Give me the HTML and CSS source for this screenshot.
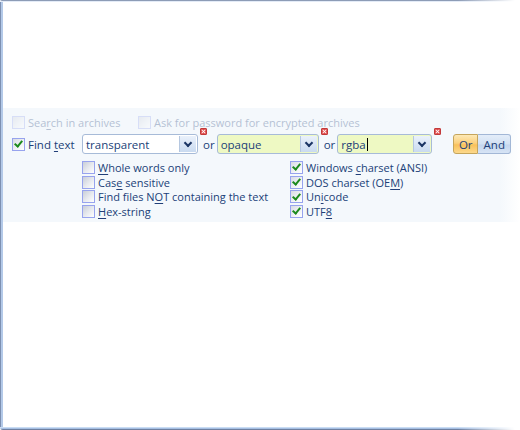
FILE: index.html
```html
<!DOCTYPE html>
<html lang="en">
<head>
    <meta charset="UTF-8">
    <title>Find text</title>
    <link rel="stylesheet" href="styles.css">
</head>
<body>
    <div class="window">
        <div class="edge-top"></div>
        <div class="middle">
            <div class="edge-left"></div>
            <div class="content">
                <div class="panel">
                    <!-- archive options, fading out -->
                    <div class="row-faded">
                        <label class="opt opt-archives"><span class="box"></span><span>Sea<u>r</u>ch in archives</span></label>
                        <label class="opt"><span class="box"></span><span>Ask for password for encrypted archives</span></label>
                    </div>

                    <div class="row-find">
                        <label class="opt find-label"><span class="box checked"></span><span>Find <u>t</u>ext</span></label>
                        <div class="combo combo-1">
                            <span class="combo-text">transparent</span>
                            <span class="drop"></span>
                            <span class="del"></span>
                        </div>
                        <span class="or">or</span>
                        <div class="combo combo-2 hit">
                            <span class="combo-text">opaque</span>
                            <span class="drop"></span>
                            <span class="del"></span>
                        </div>
                        <span class="or">or</span>
                        <div class="combo combo-3 hit">
                            <span class="combo-text">rgba<span class="caret"></span></span>
                            <span class="drop"></span>
                            <span class="del"></span>
                        </div>
                        <div class="toggle">
                            <span class="tg tg-or">Or</span>
                            <span class="tg tg-and">And</span>
                        </div>
                    </div>

                    <div class="row-opts">
                        <div class="col">
                            <label class="opt"><span class="box"></span><span><u>W</u>hole words only</span></label>
                            <label class="opt"><span class="box"></span><span>Cas<u>e</u> sensitive</span></label>
                            <label class="opt"><span class="box"></span><span>Find files N<u>O</u>T containing the text</span></label>
                            <label class="opt"><span class="box"></span><span><u>H</u>ex-string</span></label>
                        </div>
                        <div class="col">
                            <label class="opt"><span class="box checked"></span><span>Windows <u>c</u>harset (ANSI)</span></label>
                            <label class="opt"><span class="box checked"></span><span>DOS charset (OE<u>M</u>)</span></label>
                            <label class="opt"><span class="box checked"></span><span>Un<u>i</u>code</span></label>
                            <label class="opt"><span class="box checked"></span><span>UTF<u>8</u></span></label>
                        </div>
                    </div>
                </div>
            </div>
        </div>
        <div class="edge-bottom"></div>
    </div>
</body>
</html>
```

FILE: styles.css
```css
body {
    margin: 0;
    background: #ffffff;
    font-family: "Open Sans", "Noto Sans", sans-serif;
    font-size: 11px;
    color: #213f78;
}

.window {
    width: 520px;
    height: 430px;
    display: flex;
    flex-direction: column;
}

.edge-top {
    height: 2px;
    border-top-left-radius: 3px;
    background:
        linear-gradient(to right, rgba(255,255,255,0) 88%, #ffffff 99%),
        linear-gradient(to bottom, #8d9cb6 0 1px, #e3ebf7 1px 2px);
}

.middle {
    flex: 1;
    display: flex;
}

.edge-left {
    width: 3px;
    background: linear-gradient(to right, #7d90b1 0 1px, #b3c9e8 1px 3px);
}

.edge-bottom {
    height: 3px;
    border-bottom-left-radius: 3px;
    background:
        linear-gradient(to right, rgba(255,255,255,0) 88%, #ffffff 99%),
        linear-gradient(to bottom, #c9dcf3 0 1px, #a6bfe2 1px 2px, #6f80a0 2px 3px);
}

.content {
    flex: 1;
    padding-top: 106px;
}

.panel {
    height: 106px;
    padding-top: 8px;
    background: linear-gradient(to right, #f4f8fc 96%, #ffffff 100%);
}

.row-faded {
    display: flex;
    height: 13px;
    padding-left: 9px;
    opacity: 0.3;
}

.opt {
    display: flex;
    align-items: center;
    gap: 3px;
    height: 15px;
    white-space: nowrap;
}

.row-faded .opt {
    height: 13px;
}

.opt u {
    text-decoration-thickness: 1px;
    text-underline-offset: 2px;
}

.opt-archives {
    width: 126px;
}

.box {
    width: 11px;
    height: 11px;
    border: 1px solid #97a3ee;
    background: linear-gradient(135deg, #c9ced8 0%, #e9ebf0 55%, #ffffff 100%);
    display: flex;
    align-items: center;
    justify-content: center;
    flex-shrink: 0;
}

.box.checked {
    background: linear-gradient(135deg, #d7dbe3 0%, #f2f3f6 60%, #ffffff 100%);
}

.box.checked::after {
    content: "";
    width: 3px;
    height: 6px;
    border: solid #1d8a1d;
    border-width: 0 2px 2px 0;
    transform: rotate(40deg);
    margin-top: -2px;
}

.row-find {
    display: flex;
    align-items: center;
    height: 20px;
    margin-top: 5px;
    padding-left: 9px;
}

.find-label {
    width: 70px;
    font-size: 11.5px;
}

.combo {
    position: relative;
    height: 18px;
    border: 1px solid #a7bbd8;
    border-radius: 3px;
    background: #ffffff;
    display: flex;
    align-items: center;
    font-size: 11.5px;
}

.combo.hit {
    background: #eef9c3;
}

.combo-1 { width: 114px; }
.combo-2 { width: 100px; }
.combo-3 { width: 93px; }

.combo-text {
    flex: 1;
    padding-left: 3px;
    display: flex;
    align-items: center;
}

.caret {
    width: 1px;
    height: 13px;
    background: #000000;
    margin-left: 1px;
}

.drop {
    width: 16px;
    height: 16px;
    margin-right: 1px;
    border-left: 1px solid #b5c7e0;
    background: linear-gradient(to bottom, #eaf1fb, #c9daf0);
    display: flex;
    align-items: center;
    justify-content: center;
}

.drop::after {
    content: "";
    width: 4px;
    height: 4px;
    border: solid #1b3564;
    border-width: 0 2px 2px 0;
    transform: rotate(45deg);
    margin-top: -3px;
}

/* small red "remove" badge on the combo corner */
.del {
    position: absolute;
    top: -7px;
    right: -10px;
    width: 7px;
    height: 7px;
    border-radius: 1px;
    background: #e04a4a;
    border: 1px solid #c23a3a;
    box-sizing: border-box;
}

.del::before,
.del::after {
    content: "";
    position: absolute;
    left: 2px;
    top: 0;
    width: 1px;
    height: 5px;
    background: #ffffff;
    transform: rotate(45deg);
}

.del::after {
    transform: rotate(-45deg);
}

.or {
    padding: 0 2px 0 5px;
    font-size: 11.5px;
}

.toggle {
    display: flex;
    margin-left: 21px;
    height: 20px;
}

.tg {
    display: flex;
    align-items: center;
    justify-content: center;
    font-size: 11.5px;
    box-sizing: border-box;
}

.tg-or {
    width: 25px;
    border: 1px solid #c5a55c;
    border-radius: 3px 0 0 3px;
    background: linear-gradient(to bottom, #fde9b6 0%, #fbd07d 45%, #f9c15a 55%, #fcd98c 100%);
}

.tg-and {
    width: 33px;
    border: 1px solid #a2b7d6;
    border-left: none;
    border-radius: 0 3px 3px 0;
    background: linear-gradient(to bottom, #e3edf9 0%, #d3e1f3 50%, #c4d6ee 55%, #d7e4f5 100%);
}

.row-opts {
    display: flex;
    padding-left: 79px;
    margin-top: 6px;
}

.col {
    display: flex;
    flex-direction: column;
    width: 208px;
}

.col .opt {
    height: 14.7px;
}
```
